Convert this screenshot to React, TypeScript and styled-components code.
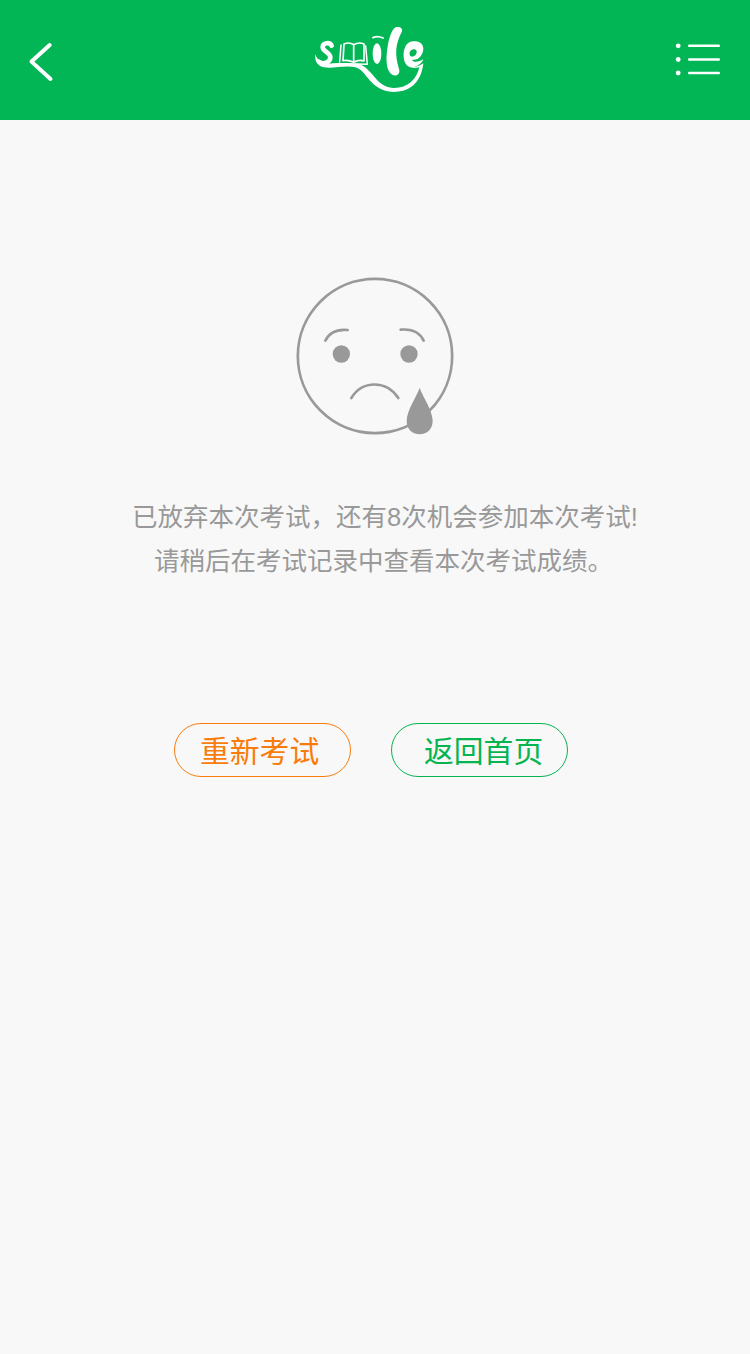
import React from 'react';
import styled, { createGlobalStyle } from 'styled-components';

const GlobalStyle = createGlobalStyle`
  * { box-sizing: border-box; }
  body {
    margin: 0;
    background: #f8f8f8;
    font-family: "Liberation Sans", "Noto Sans CJK SC", sans-serif;
  }
`;

const Page = styled.div`
  min-height: 1354px;
  display: flex;
  flex-direction: column;
  background: #f8f8f8;
`;

const Header = styled.header`
  height: 120px;
  padding: 0 15px;
  display: grid;
  grid-template-columns: 290px 1fr 60px;
  align-items: center;
  background: #02b656;
`;

const IconButton = styled.button`
  width: 60px;
  height: 60px;
  padding: 0;
  border: 0;
  background: none;
  display: flex;
`;

const Content = styled.main`
  display: flex;
  flex-direction: column;
  align-items: center;
  padding-top: 145px;
`;

const Message = styled.div`
  width: 506px;
  margin: 50px 0 0 20px;
  display: flex;
  flex-direction: column;
  color: #999;
  font-size: 25.5px;
  line-height: 44px;
  white-space: nowrap;
`;

const Line = styled.p<{ $indent?: number }>`
  margin: 0;
  padding-left: ${({ $indent = 0 }) => $indent}px;
`;

const Actions = styled.div`
  display: flex;
  gap: 40px;
  margin: 140px 8px 0 0;
`;

const ActionButton = styled.button<{ $color: string; $left: number }>`
  width: 177px;
  height: 54px;
  padding: 4px 0 0 ${({ $left }) => $left}px;
  border: 1px solid ${({ $color }) => $color};
  border-radius: 27px;
  background: none;
  color: ${({ $color }) => $color};
  font-family: inherit;
  font-size: 29.8px;
  line-height: 48px;
  text-align: left;
  white-space: nowrap;
`;

const BackIcon = () => (
  <svg width="60" height="60" viewBox="0 0 60 60" fill="none" stroke="#fff" strokeWidth="4" strokeLinecap="round" strokeLinejoin="round">
    <path d="M34.7 15 L16.5 31.6 L35.5 49" />
  </svg>
);

const MenuIcon = () => (
  <svg width="60" height="60" viewBox="0 0 60 60" fill="#fff">
    {[15.8, 29.5, 43].map((y) => (
      <g key={y}>
        <circle cx="3.2" cy={y} r="2.4" />
        <rect x="13" y={y - 1.2} width="32" height="2.4" rx="1.2" />
      </g>
    ))}
  </svg>
);

const Logo = () => (
  <svg width="130" height="90" viewBox="0 0 390 270" fill="none" stroke="#fff" strokeLinecap="round" strokeLinejoin="round">
    <path d="M80 92 C75 81 53 82 53 97 C53 109 76 113 76 127 C76 143 53 150 42 140" strokeWidth="14" />
    <path
      d="M31 118 C28 137 38 154 57 157 C85 162 120 150 151 157 C185 164 194 229 265 231 C324 231 350 193 355 145 C342 154 329 157 316 157 C328 160 338 159 343 156 C335 193 308 220 265 219 C209 217 200 149 151 145 C125 143 107 144 84 145 C60 148 37 140 31 118 Z"
      fill="#fff" stroke="none"
    />
    <path d="M114 137 L117 87 Q133 80 146 89 Q162 80 177 87 L177 138 Q161 133 146 142 Q130 134 114 137 M146 89 L146 142" strokeWidth="5" />
    <path d="M108 90 L104 141 M182 93 L187 148 L151 147" strokeWidth="4.5" />
    <ellipse cx="216" cy="116" rx="13" ry="31" fill="#fff" stroke="none" />
    <path d="M204 68 Q218 61 234 69" strokeWidth="5.5" />
    <path d="M272 37 C285 34 295 41 290 51 C271 89 269 117 282 162 C287 177 275 185 263 180 C243 169 242 133 247 101 C251 75 258 45 272 37 Z" fill="#fff" stroke="none" />
    <path fillRule="evenodd" d="M328 79 C304 78 294 102 296 125 C298 148 309 160 327 156 C342 153 352 142 355 133 C344 140 326 145 321 134 C340 138 354 120 355 102 C355 87 344 79 328 79 Z M326 103 C334 103 337 109 334 116 C331 123 321 127 316 123 C310 115 316 103 326 103 Z" fill="#fff" stroke="none" />
  </svg>
);

const SadFace = () => (
  <svg width="180" height="180" viewBox="0 0 540 540" fill="none" stroke="#999" strokeWidth="8" strokeLinecap="round">
    <circle cx="270" cy="273" r="231.5" />
    <path d="M121 227 Q139 190 188 195 M347 194 Q398 189 416 227" />
    <path d="M199 399 C232 345 304 345 340 399" />
    <g fill="#999" stroke="none">
      <circle cx="169" cy="267" r="26" />
      <circle cx="372" cy="267" r="26" />
      <path d="M404 368 C412 393 443 436 443 468 C443 492 426 508 404 508 C382 508 365 492 365 468 C365 436 396 393 404 368 Z" />
    </g>
  </svg>
);

export default function App() {
  return (
    <Page>
      <GlobalStyle />
      <Header>
        <IconButton aria-label="返回"><BackIcon /></IconButton>
        <Logo />
        <IconButton aria-label="菜单"><MenuIcon /></IconButton>
      </Header>
      <Content>
        <SadFace />
        <Message>
          <Line>已放弃本次考试，还有8次机会参加本次考试!</Line>
          <Line $indent={22}>请稍后在考试记录中查看本次考试成绩。</Line>
        </Message>
        <Actions>
          <ActionButton $color="#f97c0c" $left={25}>重新考试</ActionButton>
          <ActionButton $color="#06b450" $left={32}>返回首页</ActionButton>
        </Actions>
      </Content>
    </Page>
  );
}
